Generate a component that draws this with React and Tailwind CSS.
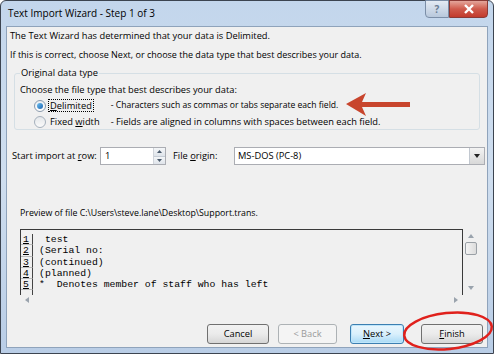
export default function App() {
  const rows = [" test", "(Serial no:", "(continued)", "(planned)", "*  Denotes member of staff who has left"]
  const ui = { fontFamily: '"Open Sans", "Noto Sans", sans-serif' }
  const mono = { fontFamily: '"Liberation Mono", "DejaVu Sans Mono", monospace' }

  return (
    <div className="relative w-[496px] h-[356px] bg-white overflow-hidden" style={ui}>
      <div className="absolute left-0 top-0 w-[494px] h-[354px] rounded-tl-[6px] rounded-tr-[6px] border border-[#3c4450] bg-gradient-to-b from-[#c3d6ec] via-[#cfdeef] to-[#b9cde6] flex flex-col">
        {/* title bar */}
        <div className="h-[25px] flex items-start">
          <span className="pl-[7px] pt-[5px] text-[10px] leading-[14px] text-black whitespace-nowrap">Text Import Wizard - Step 1 of 3</span>
          <div className="ml-auto flex mr-[5px] -mt-px">
            <div className="w-[24px] h-[18px] rounded-bl-[4px] border border-[#7b8ea7] bg-gradient-to-b from-[#e4ebf4] to-[#b8c8dc] flex items-center justify-center text-[10px] text-[#6a7c94] font-bold">?</div>
            <div className="w-[39px] h-[18px] rounded-br-[4px] border border-[#8b3a36] bg-gradient-to-b from-[#e3a59b] via-[#cf5a4c] to-[#c23a2c] flex items-center justify-center">
              <svg width="12" height="10" viewBox="0 0 12 10"><path d="M2 1 L10 9 M10 1 L2 9" stroke="#fff" strokeWidth="2.4" /></svg>
            </div>
          </div>
        </div>

        {/* content */}
        <div className="mx-[5px] h-[322px] border border-[#8fa3bb] bg-[#f0f0f0] text-[9.3px] text-black flex flex-col whitespace-nowrap">
          <div className="pl-[3px] pt-[3px] leading-[12px]">The Text Wizard has determined that your data is Delimited.</div>
          <div className="pl-[3px] pt-[7px] leading-[12px] text-[9px]">If this is correct, choose Next, or choose the data type that best describes your data.</div>

          <div className="relative mt-[12px] mx-[7px] h-[57px] border border-[#d5dfe5] rounded-[3px]">
            <span className="absolute -top-[7px] left-[5px] px-[1px] bg-[#f0f0f0] leading-[12px]">Original data type</span>
            <div className="pl-[5px] pt-[10px] leading-[12px]">Choose the file type that best describes your data:</div>
            <div className="flex items-center pl-[19px] mt-[2px] h-[15px]">
              <span className="w-[12px] h-[12px] rounded-full border border-[#8a9aac] bg-gradient-to-b from-[#e9edf2] to-[#ffffff] flex items-center justify-center">
                <span className="w-[6px] h-[6px] rounded-full bg-gradient-to-br from-[#6fc2f2] to-[#1a63b0]" />
              </span>
              <span className="ml-[2px] px-[1px] border border-dotted border-black leading-[11px]"><u>D</u>elimited</span>
              <span className="ml-[17px] text-[8.6px]">- Characters such as commas or tabs separate each field.</span>
            </div>
            <div className="flex items-center pl-[19px] mt-[1px] h-[15px]">
              <span className="w-[12px] h-[12px] rounded-full border border-[#a5b0bc] bg-gradient-to-b from-[#e4e7ea] to-[#fafafa]" />
              <span className="ml-[4px]">Fixed <u>w</u>idth</span>
              <span className="ml-[11px]">- Fields are aligned in columns with spaces between each field.</span>
            </div>
          </div>

          <div className="flex items-center mt-[17px] pl-[5px] h-[18px]">
            <span className="w-[82px]">Start import at <u>r</u>ow:</span>
            <div className="ml-[6px] w-[66px] h-[18px] border border-[#abadb3] bg-white flex">
              <span className="pl-[4px] leading-[16px]">1</span>
              <div className="ml-auto w-[12px] flex flex-col border-l border-[#d0d4da]">
                <div className="flex-1 bg-gradient-to-b from-[#f4f6f8] to-[#dfe4ea] flex items-center justify-center border-b border-[#c5ccd5]">
                  <svg width="5" height="3" viewBox="0 0 5 3"><path d="M0 3 L2.5 0 L5 3 Z" fill="#4a5a6c" /></svg>
                </div>
                <div className="flex-1 bg-gradient-to-b from-[#f4f6f8] to-[#dfe4ea] flex items-center justify-center">
                  <svg width="5" height="3" viewBox="0 0 5 3"><path d="M0 0 L5 0 L2.5 3 Z" fill="#4a5a6c" /></svg>
                </div>
              </div>
            </div>
            <span className="ml-[7px] w-[61px]">File <u>o</u>rigin:</span>
            <div className="w-[251px] h-[18px] border border-[#abadb3] bg-white flex">
              <span className="pl-[3px] leading-[16px]">MS-DOS (PC-8)</span>
              <div className="ml-auto w-[15px] border-l border-[#c2c8d0] bg-gradient-to-b from-[#f3f3f3] to-[#d8d8d8] flex items-center justify-center">
                <svg width="6" height="4" viewBox="0 0 6 4"><path d="M0 0 L6 0 L3 4 Z" fill="#222" /></svg>
              </div>
            </div>
          </div>

          <div className="pl-[13px] mt-[42px] leading-[12px] text-[8.8px]">Preview of file C:\Users\steve.lane\Desktop\Support.trans.</div>

          <div className="mt-[10px] ml-[13px] flex">
            <div className="w-[443px] h-[66px] border-t border-l border-[#3a3a3a] border-r border-r-[#3a3a3a] bg-[#f0f0f0] flex flex-col pt-[4px]" style={mono}>
              {rows.map((r, i) => (
                <div key={i} className="flex h-[11.3px] text-[9.8px] leading-[11px]">
                  <span className="w-[12px] border-r border-[#444] border-b border-b-[#bbb] pl-[2px] underline">{i + 1}</span>
                  <span className="pl-[6px] whitespace-pre">{r}</span>
                </div>
              ))}
              <div className="w-[12px] flex-1 border-r border-[#444]" />
            </div>
            <div className="w-[14px] h-[66px] ml-[1px] flex flex-col items-center bg-[#f0f0f0]">
              <svg className="mt-[5px]" width="6" height="4" viewBox="0 0 6 4"><path d="M0 4 L3 0 L6 4 Z" fill="#9aa3ad" /></svg>
              <div className="mt-[4px] w-[12px] h-[13px] border border-[#9aa0a6] rounded-[2px] bg-gradient-to-r from-[#f4f4f4] to-[#dcdcdc]" />
              <svg className="mt-auto mb-[5px]" width="6" height="4" viewBox="0 0 6 4"><path d="M0 0 L6 0 L3 4 Z" fill="#9aa3ad" /></svg>
            </div>
          </div>
          <div className="ml-[13px] w-[443px] h-[10px] flex items-center justify-between px-[5px]">
            <svg width="4" height="6" viewBox="0 0 4 6"><path d="M4 0 L0 3 L4 6 Z" fill="#9aa3ad" /></svg>
            <svg width="4" height="6" viewBox="0 0 4 6"><path d="M0 0 L4 3 L0 6 Z" fill="#9aa3ad" /></svg>
          </div>

          <div className="mt-[19px] flex pl-[200px] gap-[9px]">
            <button className="w-[62px] h-[20px] rounded-[3px] border border-[#707070] bg-gradient-to-b from-[#f2f2f2] via-[#ebebeb] to-[#d6d6d6] leading-[18px]">Cancel</button>
            <button className="w-[59px] h-[20px] rounded-[3px] border border-[#adb2b5] bg-[#f4f4f4] text-[#9a9a9a] leading-[18px]">&lt; Back</button>
            <button className="ml-[4px] w-[54px] h-[20px] rounded-[3px] border border-[#3c7fb1] bg-gradient-to-b from-[#eaf6fd] via-[#d9f0fc] to-[#a7d9f5] leading-[18px] shadow-[inset_0_0_0_1px_#bfe6fb]"><u>N</u>ext &gt;</button>
            <button className="ml-[8px] w-[62px] h-[20px] rounded-[3px] border border-[#707070] bg-gradient-to-b from-[#f2f2f2] via-[#ebebeb] to-[#d6d6d6] leading-[18px]"><u>F</u>inish</button>
          </div>
        </div>
      </div>

      {/* annotations */}
      <svg className="absolute left-[344px] top-[91px]" width="68" height="28" viewBox="0 0 68 28">
        <path d="M66 11 L18 11 L22 2 L2 13 L22 25 L18 16 L66 16 Z" fill="#c8452d" />
      </svg>
      <svg className="absolute left-[401px] top-[309px]" width="94" height="44" viewBox="0 0 94 44">
        <ellipse cx="47" cy="22" rx="44" ry="18" fill="none" stroke="#e0211c" strokeWidth="2.5" transform="rotate(-6 47 22)" />
      </svg>
    </div>
  )
}
